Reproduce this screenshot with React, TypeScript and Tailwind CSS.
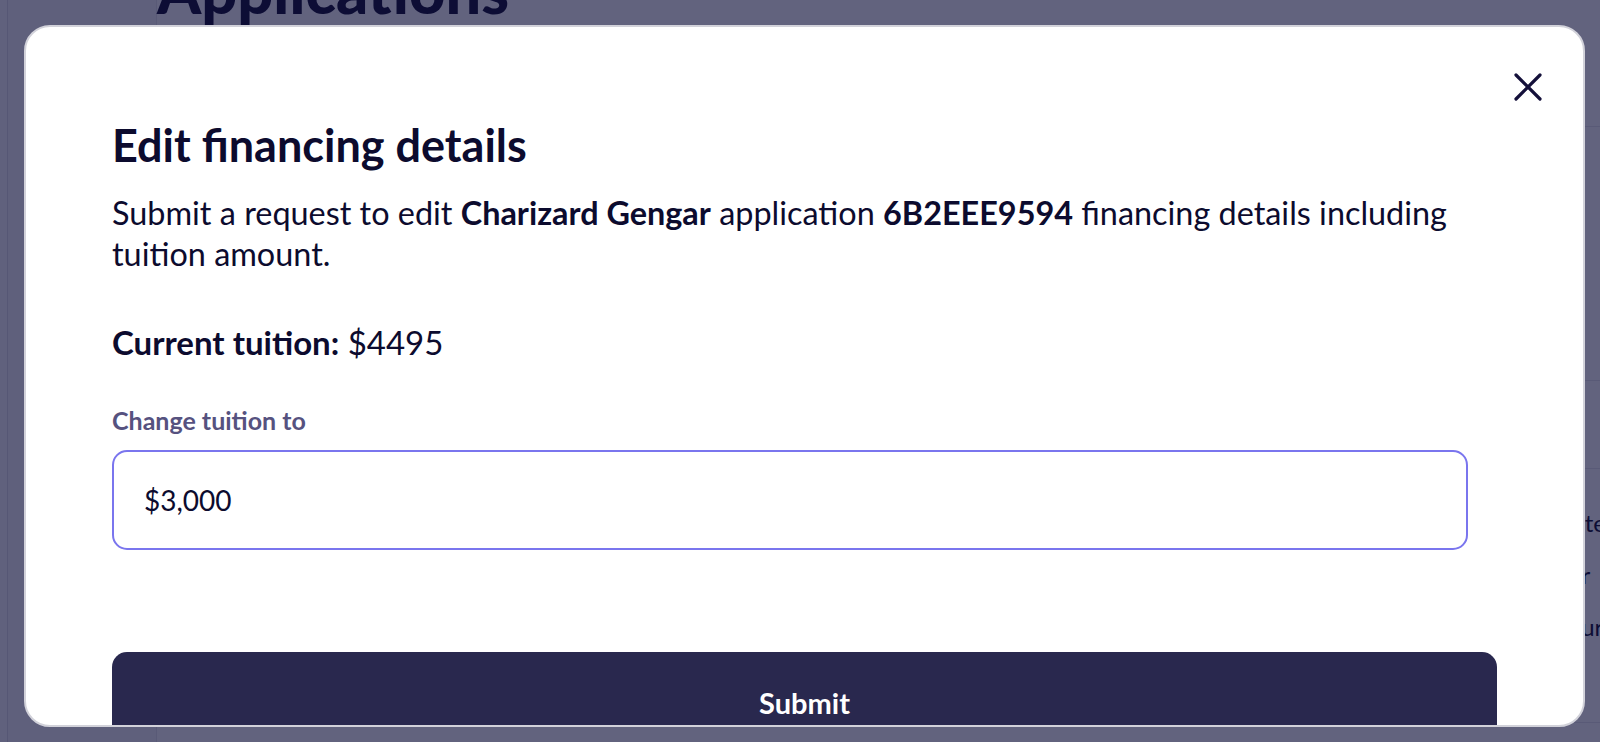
function PageBehind() {
  return (
    <div className="flex h-[742px] w-[1600px] overflow-hidden bg-white text-[#0c0b2e]">
      <aside className="flex w-[157px] shrink-0 border-r border-[#e4e4ec] bg-[#f6f6f9]">
        <div className="w-[8px] border-r border-[#dcdce6] bg-[#fafafc]" />
      </aside>
      <main className="flex min-w-0 flex-1 flex-col">
        <div className="flex h-[127px] flex-col border-b border-[#e4e4ec]">
          <h1 className="-mt-[42px] whitespace-nowrap text-[63px] font-black leading-[1.0]">
            Applications
          </h1>
        </div>
        <div className="h-[254px] border-b border-[#e4e4ec]" />
        <div className="h-[88px] border-b border-[#e4e4ec]" />
        <div className="flex h-[254px] flex-col gap-[24px] border-b border-[#e4e4ec] pl-[1398px] pt-[40px] text-[24px] leading-[28px]">
          <span className="whitespace-nowrap">Date</span>
          <span className="whitespace-nowrap">Per</span>
          <span className="whitespace-nowrap">Four</span>
        </div>
      </main>
    </div>
  );
}

export default function App() {
  return (
    <div
      className="relative h-[742px] w-[1600px] overflow-hidden"
      style={{ fontFamily: "Lato, 'Open Sans', sans-serif" }}
    >
      <PageBehind />
      <div className="absolute inset-0 bg-[#0e1039]/65">
        <div className="relative ml-[24px] mt-[25px] h-[702px] w-[1561px] overflow-hidden rounded-[26px] border-2 border-[#d2d2da] bg-white">
          <button
            aria-label="Close"
            className="absolute right-[41px] top-[46px] flex h-[28px] w-[28px] items-center justify-center text-[#14103a]"
          >
            <svg viewBox="0 0 28 28" className="h-[28px] w-[28px]" fill="none" stroke="currentColor" strokeWidth={3.2} strokeLinecap="round">
              <path d="M2 2 26 26M26 2 2 26" />
            </svg>
          </button>
          <div className="flex flex-col pl-[86px] pt-[91px] text-[#0c0b2e]">
            <h2 className="text-[45px] font-bold leading-[54px]">Edit financing details</h2>
            <p className="mt-[20px] w-[1400px] text-[32.4px] leading-[41px]">
              Submit a request to edit <b className="font-bold">Charizard Gengar</b> application{" "}
              <b className="font-bold">6B2EEE9594</b> financing details including tuition amount.
            </p>
            <p className="mt-[48px] text-[33px] leading-[40px]">
              <b className="font-bold">Current tuition:</b> $4495
            </p>
            <label className="mt-[43px] text-[25px] font-bold leading-[30px] text-[#56527f]">
              Change tuition to
            </label>
            <div className="mt-[15px] flex h-[100px] w-[1356px] items-center rounded-[15px] border-2 border-[#7a75ee] px-[30px] text-[28px]">
              $3,000
            </div>
            <button className="mt-[102px] flex h-[110px] w-[1385px] shrink-0 items-start justify-center rounded-[15px] bg-[#29284e] pt-[33px] text-[29px] font-bold leading-[35px] text-white">
              Submit
            </button>
          </div>
        </div>
      </div>
    </div>
  );
}
